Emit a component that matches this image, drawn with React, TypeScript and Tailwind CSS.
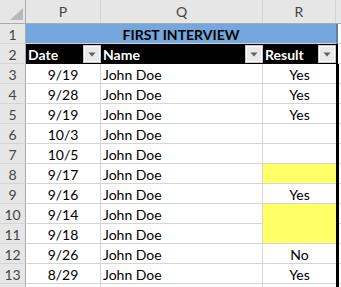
import React from 'react';

type Row = { n: number; date: string; name: string; result: string; fill?: boolean };

const rows: Row[] = [
  { n: 3, date: '9/19', name: 'John Doe', result: 'Yes' },
  { n: 4, date: '9/28', name: 'John Doe', result: 'Yes' },
  { n: 5, date: '9/19', name: 'John Doe', result: 'Yes' },
  { n: 6, date: '10/3', name: 'John Doe', result: '' },
  { n: 7, date: '10/5', name: 'John Doe', result: '' },
  { n: 8, date: '9/17', name: 'John Doe', result: '', fill: true },
  { n: 9, date: '9/16', name: 'John Doe', result: 'Yes' },
  { n: 10, date: '9/14', name: 'John Doe', result: '', fill: true },
  { n: 11, date: '9/18', name: 'John Doe', result: '', fill: true },
  { n: 12, date: '9/26', name: 'John Doe', result: 'No' },
  { n: 13, date: '8/29', name: 'John Doe', result: 'Yes' },
];

const FilterButton: React.FC = () => (
  <div className="w-4 h-4 bg-[#e9e9e9] border border-[#ffffff] outline outline-1 outline-[#c6c6c6] flex items-center justify-center">
    <svg width="8" height="5" viewBox="0 0 8 5">
      <path d="M0.5 0.5 L7.5 0.5 L4 4.5 Z" fill="#606060" />
    </svg>
  </div>
);

const RowHead: React.FC<{ n?: number }> = ({ n }) => (
  <div className="w-[26px] shrink-0 bg-[#e6e6e6] border-r border-r-[#ababab] border-b border-b-[#d4d4d4] flex items-center justify-center pt-[2px] text-[#444444]">
    {n}
  </div>
);

const App: React.FC = () => {
  return (
    <div className="w-[341px] h-[287px] overflow-hidden bg-white text-[14px] leading-none text-black" style={{ fontFamily: 'Lato, "Open Sans", sans-serif' }}>
      {/* column letters */}
      <div className="flex h-[24px] bg-[#e6e6e6] border-b border-b-[#ababab] text-[#444444]">
        <div className="w-[26px] shrink-0 border-r border-r-[#ababab] relative">
          <svg className="absolute left-[10px] top-[8px]" width="13" height="12" viewBox="0 0 13 12">
            <path d="M13 0 L13 12 L0 12 Z" fill="#b8b8b8" />
          </svg>
        </div>
        <div className="w-[75px] shrink-0 border-r border-r-[#d4d4d4] flex items-center justify-center">P</div>
        <div className="w-[162px] shrink-0 border-r border-r-[#d4d4d4] flex items-center justify-center">Q</div>
        <div className="w-[73px] shrink-0 border-r border-r-[#d4d4d4] flex items-center justify-center">R</div>
        <div className="flex-1" />
      </div>

      {/* row 1 - merged title */}
      <div className="flex h-[20px]">
        <RowHead n={1} />
        <div className="w-[310px] shrink-0 bg-[#74a7dd] border-b border-b-[#d4d4d4] flex items-center justify-center pt-[2px] font-bold">
          FIRST INTERVIEW
        </div>
        <div className="w-[2px] shrink-0 bg-[#5b7fa8]" />
        <div className="flex-1 border-b border-b-[#d4d4d4]" />
      </div>

      {/* row 2 - table headers */}
      <div className="flex h-[20px]">
        <RowHead n={2} />
        <div className="w-[75px] shrink-0 bg-black text-white font-bold flex items-center justify-between pl-[2px] pr-[1px]">
          <span className="pt-[2px]">Date</span>
          <FilterButton />
        </div>
        <div className="w-[162px] shrink-0 bg-black text-white font-bold flex items-center justify-between pl-[2px] pr-[1px]">
          <span className="pt-[2px]">Name</span>
          <FilterButton />
        </div>
        <div className="w-[73px] shrink-0 bg-black text-white font-bold flex items-center justify-between pl-[2px] pr-[1px]">
          <span className="pt-[2px]">Result</span>
          <FilterButton />
        </div>
        <div className="w-[2px] shrink-0 bg-black" />
        <div className="flex-1 border-b border-b-[#d4d4d4]" />
      </div>

      {rows.map((r, i) => {
        const nextFill = rows[i + 1]?.fill;
        return (
          <div key={r.n} className="flex h-[20px]">
            <RowHead n={r.n} />
            <div className="w-[75px] shrink-0 border-r border-r-[#d4d4d4] border-b border-b-[#d4d4d4] flex items-center justify-center pt-[2px]">
              {r.date}
            </div>
            <div className="w-[162px] shrink-0 border-r border-r-[#d4d4d4] border-b border-b-[#d4d4d4] flex items-center pl-[2px] pt-[2px]">
              {r.name}
            </div>
            <div
              className={`w-[73px] shrink-0 border-b flex items-center justify-center pt-[2px] ${
                r.fill ? 'bg-[#ffff66]' : ''
              } ${r.fill && nextFill ? 'border-b-[#ffff66]' : 'border-b-[#d4d4d4]'}`}
            >
              {r.result}
            </div>
            <div className="w-[3px] shrink-0 bg-black" />
            <div className="flex-1 border-b border-b-[#d4d4d4]" />
          </div>
        );
      })}

      {/* row 14, only its top edge is in view */}
      <div className="flex h-[20px]">
        <RowHead />
        <div className="w-[75px] shrink-0 border-r border-r-[#d4d4d4]" />
        <div className="w-[162px] shrink-0 border-r border-r-[#d4d4d4]" />
        <div className="w-[73px] shrink-0" />
        <div className="w-[3px] shrink-0 bg-black" />
        <div className="flex-1" />
      </div>
    </div>
  );
};

export default App;
